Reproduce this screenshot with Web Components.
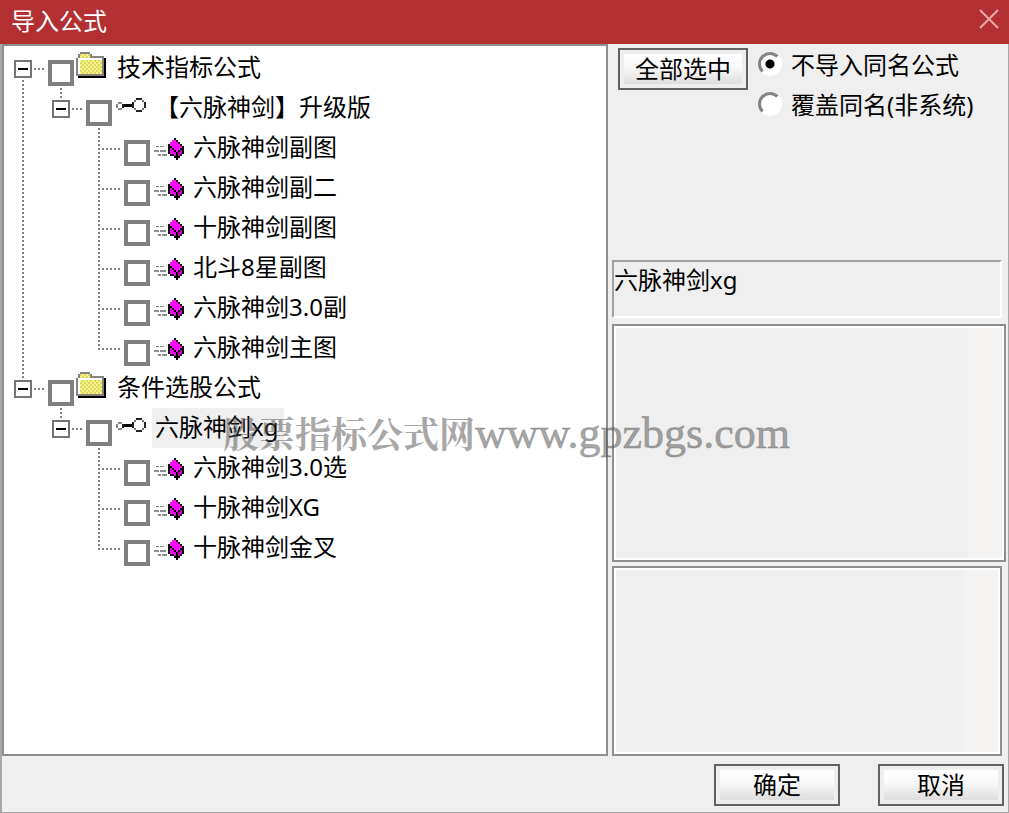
<!DOCTYPE html>
<html lang="zh-CN">
<head>
<meta charset="utf-8">
<title>导入公式</title>
<style>
  body {
    margin: 0;
    font: 24px/38px "Noto Sans", "Noto Sans CJK SC", sans-serif;
    color: #000;
    background: #efefef;
  }
</style>
</head>
<body>
<import-dialog></import-dialog>

<script>
const define = (name, html, setup) => {
  const template = document.createElement('template');
  template.innerHTML = html;
  customElements.define(name, class extends HTMLElement {
    constructor() {
      super();
      this.attachShadow({ mode: 'open' }).append(template.content.cloneNode(true));
    }
    connectedCallback() {
      if (setup) setup(this, this.shadowRoot);
    }
  });
};

const ICONS = {
  folder: `
    <defs><pattern id="d" width="4" height="4" patternUnits="userSpaceOnUse">
      <rect width="4" height="4" fill="#f4f290"/><path d="M0 0h2v2h-2zM2 2h2v2h-2z" fill="#dcda58"/></pattern></defs>
    <path d="M30 10h2v20H4v-2h26z" fill="#000"/>
    <path d="M2 10h2V6h2V4h10v2h2v2h12v20H2z" fill="#848478"/>
    <path d="M4 10h2V6h10v4h12v16H4z" fill="url(#d)"/>
    <path d="M4 10h24v2H6v14H4z" fill="#fff"/>`,
  key: `
    <path d="M11 16h11v3H11z" fill="#000"/>
    <path d="M6 14h4v2H6zM4 16h2v4H4zM6 20h4v2H6z" fill="#8a8a8a"/>
    <path d="M10 16h2v4h-2z" fill="#222"/>
    <path d="M24 10h6v2h-6zM24 22h6v2h-6zM20 14h2v6h-2zM32 14h2v6h-2z" fill="#222"/>
    <path d="M22 12h2v2h-2zM30 12h2v2h-2zM22 20h2v2h-2zM30 20h2v2h-2z" fill="#777"/>`,
  cube: `
    <path d="M6 18h3v1H6zM10 18h4v1h-4zM4 22h5v2H4zM10 22h6v2h-6zM8 26h3v2H8zM12 26h5v2h-5z" fill="#8d8d8d"/>
    <path d="M24 10h2v2h2v2h2v2h2v2h2v8h-2v2h-2v2h-2v2h-2v-2h-2v-2h-4v-2h-2V16h2v-2h2v-2h2z" fill="#000"/>
    <path d="M24 12h2v2h2v2h2v2h2v2h-2v2h-2v2h-2v-2h-2v-2h-2v-2h-2v-4h2v-2h2z" fill="#ff08ff"/>
    <path d="M20 20h2v2h2v2h2v4h-2v-2h-4z" fill="#ee08ee"/>
    <path d="M32 20v6h-2v2h-2v-4h2v-2h2z" fill="#c400c4"/>`
};

define('title-bar', `
  <style>
    :host { display: flex; align-items: center; justify-content: space-between;
            height: 44px; padding: 0 10px 0 11px; background: #b22f32; color: #fff; }
    h1 { margin: 0; padding-bottom: 2px; font: inherit; }
    button { display: flex; padding: 0; border: 0; background: none; }
    svg { display: block; padding-bottom: 6px; }
  </style>
  <h1><slot></slot></h1>
  <button type="button" aria-label="关闭">
    <svg width="20" height="20" viewBox="0 0 20 20" stroke="#e9a9aa" stroke-width="2"><path d="M1 1l18 18M19 1L1 19"/></svg>
  </button>`);

define('formula-node', `
  <style>
    :host { display: block; --start: 0px; --length: 100%;
      --dots: repeating-linear-gradient(#808080 0 2px, transparent 2px 4px);
      background: var(--dots) 8px var(--start) / 2px var(--length) no-repeat; }
    :host([first]) { --start: 32px; }
    :host([last]) { --length: 22px; }
    .row { display: flex; height: 40px; }
    .branch { box-sizing: border-box; width: 34px; height: 40px; padding-top: 12px;
      background: repeating-linear-gradient(90deg, #808080 0 2px, transparent 2px 4px) 8px 20px / 24px 2px no-repeat; }
    .toggle { display: block; width: 18px; height: 18px; padding: 0; border: 2px solid #747474;
      border-radius: 0; box-shadow: 2px 0 #fff;
      background: linear-gradient(#000, #000) center / 10px 2px no-repeat #fff; }
    :host([leaf]) .toggle { display: none; }
    label { display: flex; }
    input { appearance: none; box-sizing: border-box; width: 26px; height: 26px; margin: 12px 0 0;
      border: 4px solid #808080; background: #fff; }
    input:checked { background: #808080; }
    svg { display: block; }
    .text { padding: 0 3px 2px; white-space: nowrap; }
    :host([selected]) .text { background: #efefef; padding-right: 6px; }
    .children { padding-left: 38px; }
  </style>
  <div class="row">
    <span class="branch"><button class="toggle" type="button" aria-label="折叠"></button></span>
    <label><input type="checkbox"><svg width="40" height="40" viewBox="0 0 40 40" shape-rendering="crispEdges" aria-hidden="true"></svg><span class="text"></span></label>
  </div>
  <div class="children"><slot></slot></div>`,
  (host, root) => {
    root.querySelector('svg').innerHTML = ICONS[host.getAttribute('icon') || 'cube'];
    root.querySelector('.text').textContent = host.getAttribute('label');
    const toggle = root.querySelector('.toggle');
    toggle.onclick = () => {
      const children = root.querySelector('.children');
      children.hidden = !children.hidden;
    };
  });

define('formula-tree', `
  <style>
    :host { display: block; box-sizing: border-box; padding: 2px 10px; border: 2px solid #8f8f8f; background: #fff; }
  </style>
  <slot></slot>`);

define('push-button', `
  <style>
    :host { display: block; }
    button { display: block; box-sizing: border-box; width: 100%; height: 42px; padding: 0;
      border: 2px solid #626262; border-radius: 0; color: #000; font: inherit;
      background: linear-gradient(#fff, #fafafa 40%, #dedede) center / calc(100% - 8px) calc(100% - 8px) no-repeat #eeeeec; }
  </style>
  <button type="button"><slot></slot></button>`);

define('radio-choices', `
  <style>
    :host { display: block; }
    fieldset { margin: 0; padding: 0; border: 0; }
    label { display: flex; gap: 9px; height: 40px; white-space: nowrap; }
    input { appearance: none; box-sizing: border-box; width: 24px; height: 24px; margin: 6px 0 0;
      border: 3px solid; border-color: #858585 #fff #fff #858585; border-radius: 50%; background: #fff; }
    input:checked { background: radial-gradient(#000 4px, #fff 5px); }
  </style>
  <fieldset aria-label="同名公式">
    <label><input type="radio" name="mode" checked>不导入同名公式</label>
    <label><input type="radio" name="mode">覆盖同名(非系统)</label>
  </fieldset>`);

define('text-pane', `
  <style>
    :host { display: flex; border: 2px solid #8f8f8f; }
    textarea { flex: 1; min-width: 0; box-sizing: border-box; resize: none; border: 2px solid #fff; border-radius: 0; outline: 0;
      padding: 4px; font: inherit; background: linear-gradient(#f4f3f1, #f4f3f1) right / 34px 100% no-repeat #efefef; }
  </style>
  <textarea readonly></textarea>`,
  (host, root) => root.querySelector('textarea').setAttribute('aria-label', host.getAttribute('label')));

define('site-watermark', `
  <style>
    :host { display: block; font: bold 36px/52px "Liberation Serif", "Noto Serif CJK SC", "Noto Sans CJK SC", serif;
      color: rgba(80, 80, 80, .5); white-space: nowrap; pointer-events: none; }
    .latin { font-size: 44px; font-weight: normal; -webkit-text-stroke: 1px rgba(80, 80, 80, .3); }
  </style>
  股票指标公式网<span class="latin">www.gpzbgs.com</span>`);

define('import-dialog', `
  <style>
    :host { display: flex; flex-direction: column; position: relative; box-sizing: border-box; min-height: 100vh; }
    main { flex: 1; display: grid; grid-template-columns: minmax(0, 1fr) 400px;
      border: solid #a8a8a8; border-width: 0 1px 0 2px; }
    aside { display: flex; flex-direction: column; padding-left: 4px; }
    .options { display: flex; gap: 10px; height: 214px; padding: 2px 0 0 6px; }
    .options push-button { width: 130px; padding-top: 2px; }
    .name { box-sizing: border-box; height: 58px; margin: 0 6px 6px 0; border: 2px solid; border-color: #a0a0a0 #fff #fff #a0a0a0; line-height: 36px; }
    .source { flex: 1 1 238px; box-sizing: border-box; margin: 0 2px 4px 0; }
    .notes { flex: 1 1 190px; box-sizing: border-box; margin-right: 6px; }
    footer { display: flex; justify-content: flex-end; gap: 38px; padding: 8px 4px 6px;
      border: solid #a8a8a8; border-width: 0 1px 1px 2px; }
    footer push-button { width: 126px; }
    site-watermark { position: absolute; left: 223px; top: 408px; }
  </style>
  <title-bar>导入公式</title-bar>
  <main>
    <formula-tree>
      <formula-node first icon="folder" label="技术指标公式">
        <formula-node last icon="key" label="【六脉神剑】升级版">
          <formula-node leaf label="六脉神剑副图"></formula-node>
          <formula-node leaf label="六脉神剑副二"></formula-node>
          <formula-node leaf label="十脉神剑副图"></formula-node>
          <formula-node leaf label="北斗8星副图"></formula-node>
          <formula-node leaf label="六脉神剑3.0副"></formula-node>
          <formula-node leaf last label="六脉神剑主图"></formula-node>
        </formula-node>
      </formula-node>
      <formula-node last icon="folder" label="条件选股公式">
        <formula-node last selected icon="key" label="六脉神剑xg">
          <formula-node leaf label="六脉神剑3.0选"></formula-node>
          <formula-node leaf label="十脉神剑XG"></formula-node>
          <formula-node leaf last label="十脉神剑金叉"></formula-node>
        </formula-node>
      </formula-node>
    </formula-tree>
    <aside>
      <div class="options">
        <push-button>全部选中</push-button>
        <radio-choices></radio-choices>
      </div>
      <div class="name">六脉神剑xg</div>
      <text-pane class="source" label="公式源码"></text-pane>
      <text-pane class="notes" label="公式说明"></text-pane>
    </aside>
  </main>
  <footer>
    <push-button>确定</push-button>
    <push-button>取消</push-button>
  </footer>
  <site-watermark></site-watermark>`);
</script>
</body>
</html>
